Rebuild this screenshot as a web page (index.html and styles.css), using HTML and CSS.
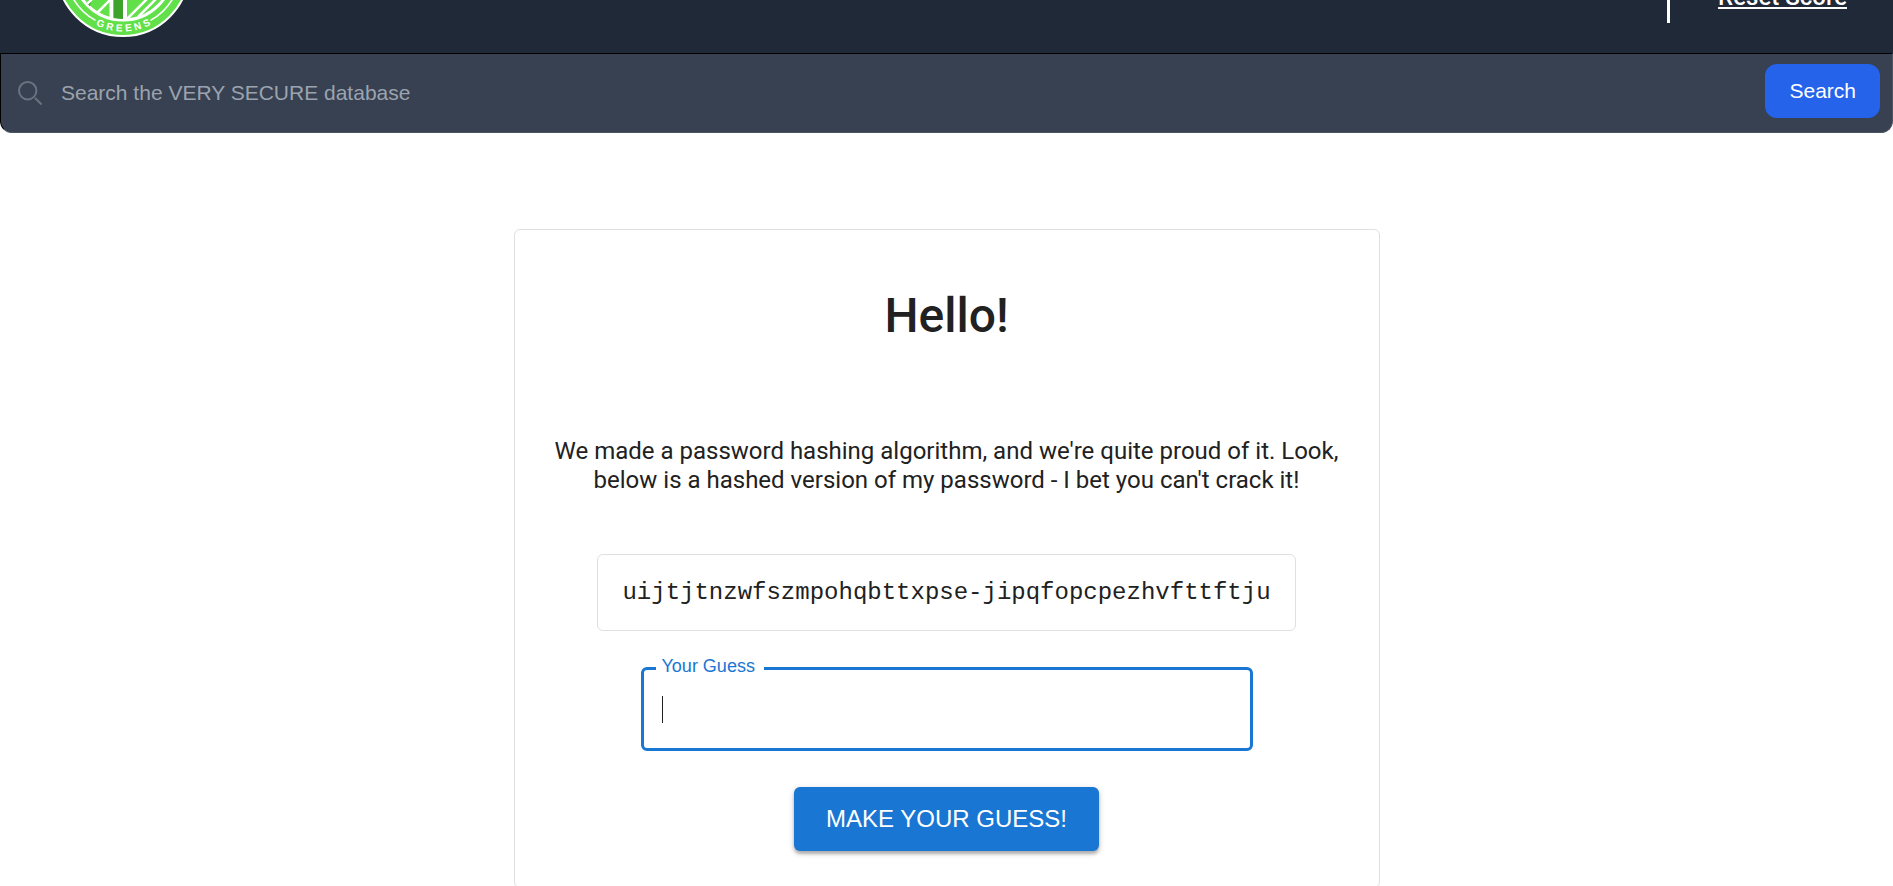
FILE: index.html
```html
<!DOCTYPE html>
<html lang="en">
<head>
<meta charset="utf-8">
<title>Password Challenge</title>
<link rel="stylesheet" href="styles.css">
</head>
<body>
<header class="topbar">
  <svg class="logo" viewBox="0 0 134 134" role="img" aria-label="Greens">
    <defs>
      <path id="arc" d="M5.500 67A61.500 61.500 0 0 0 128.500 67"/>
      <clipPath id="disc"><circle cx="67" cy="67" r="49"/></clipPath>
    </defs>
    <circle cx="67" cy="67" r="66" fill="#62e04a" stroke="#fff" stroke-width="2"/>
    <path d="M9.600 67A57.400 57.400 0 0 0 39.500 117.400M124.400 67A57.400 57.400 0 0 1 94.500 117.400" fill="none" stroke="#fff" stroke-width="1.600"/>
    <circle cx="67" cy="67" r="50" fill="#62e04a" stroke="#fff" stroke-width="3"/>
    <g clip-path="url(#disc)">
      <path d="M26 104L36 94L33 108Z" fill="#3da32b"/>
      <path d="M38 113L58 93M30 102L40 92M71 116L94 93M82 114L103 93" stroke="#fff" stroke-width="2.500"/>
      <path d="M55.500 40V118M69 40V118" stroke="#fff" stroke-width="4"/>
      <path d="M57.500 40H67V116H57.500Z" fill="#3da32b"/>
    </g>
    <text class="logo-text"><textPath href="#arc" startOffset="51%">GREENS</textPath></text>
  </svg>
  <nav class="actions"><a class="reset" href="#">Reset Score</a></nav>
</header>
<form class="search">
  <svg class="search-icon" viewBox="0 0 24 24" aria-hidden="true"><circle cx="9.700" cy="9.700" r="8.700"/><path d="M17 17L23.500 23.500"/></svg>
  <input class="search-input" type="search" aria-label="Search" placeholder="Search the VERY SECURE database">
  <button class="search-button" type="submit">Search</button>
</form>
<main class="card">
  <h1 class="title">Hello!</h1>
  <p class="intro">We made a password hashing algorithm, and we're quite proud of it. Look, below is a hashed version of my password - I bet you can't crack it!</p>
  <code class="hash">uijtjtnzwfszmpohqbttxpse-jipqfopcpezhvfttftju</code>
  <form class="guess">
    <div class="field">
      <label class="field-label" for="guess">Your Guess</label>
      <input class="field-input" id="guess" type="text" autocomplete="off" autofocus>
      <span class="caret"></span>
    </div>
    <button class="guess-button" type="submit">Make your guess!</button>
  </form>
</main>
</body>
</html>
```

FILE: styles.css
```css
* { box-sizing: border-box; }
body {
  margin: 0;
  background: #fff;
  color: #212121;
  font-family: "Liberation Sans", Arial, sans-serif;
  overflow: hidden;
}
.topbar {
  display: flex;
  justify-content: space-between;
  align-items: flex-end;
  height: 53px;
  padding: 0 46px 16px 56px;
  background: #1f2937;
  overflow: hidden;
}
.logo { width: 134px; height: 134px; flex: none; }
.logo-text {
  font: bold 10px "Liberation Sans", Arial, sans-serif;
  letter-spacing: 3px;
  fill: #fff;
  text-anchor: middle;
}
.actions {
  height: 48px;
  margin-bottom: 14px;
  padding: 8px 0 0 48px;
  border-left: 3px solid #fff;
}
.reset {
  color: #fff;
  font: 500 24px/28px Roboto, sans-serif;
}
.search {
  display: flex;
  align-items: center;
  height: 80px;
  padding: 0 12px 0 17px;
  border: 1px solid #000;
  border-right-color: #4b5563;
  border-bottom-color: #4b5563;
  border-radius: 0 0 12px 12px;
  background: #374151;
}
.search-icon { width: 24px; height: 24px; fill: none; stroke: #6b7280; stroke-width: 2; }
.search-input {
  flex: 1;
  min-width: 0;
  padding: 0;
  margin-left: 19px;
  border: 0;
  outline: 0;
  background: none;
  color: #fff;
  font: 21px/30px "Liberation Sans", Arial, sans-serif;
}
.search-input::placeholder { color: #9ca3af; }
.search-button {
  height: 54px;
  padding: 0 24px;
  margin-bottom: 4px;
  border: 0;
  border-radius: 12px;
  background: #2563eb;
  color: #fff;
  font: 21px/30px "Liberation Sans", Arial, sans-serif;
}
.card {
  display: flex;
  flex-direction: column;
  align-items: center;
  width: 866px;
  max-width: 100%;
  margin: 96px auto 0;
  padding: 57px 36px 36px;
  border: 1px solid #e0e0e0;
  border-radius: 6px;
}
.title { margin: 0; font: 500 48px/58px Roboto, sans-serif; }
.intro {
  margin: 92px 0 0;
  font: 400 24px/29px Roboto, sans-serif;
  text-align: center;
}
.hash {
  margin-top: 59px;
  padding: 24px;
  border: 1px solid #e0e0e0;
  border-radius: 6px;
  font: 24px/27px "Liberation Mono", "Courier New", monospace;
}
.guess {
  display: flex;
  flex-direction: column;
  align-items: center;
  gap: 36px;
  width: 612px;
  max-width: 100%;
  margin-top: 36px;
}
.field { position: relative; width: 100%; }
.field-input {
  display: block;
  width: 100%;
  height: 84px;
  padding: 0 18px;
  border: 3px solid #1976d2;
  border-radius: 6px;
  outline: 0;
  background: none;
  caret-color: transparent;
  color: #212121;
  font: 24px/34px "Liberation Sans", Arial, sans-serif;
}
.field-label {
  position: absolute;
  top: -11px;
  left: 15px;
  padding: 0 9px 0 6px;
  background: #fff;
  color: #1976d2;
  font-size: 18px;
  line-height: 21px;
}
.caret { position: absolute; top: 29px; left: 21px; width: 1px; height: 27px; background: #212121; }
.guess-button {
  height: 64px;
  padding: 0 32px;
  border: 0;
  border-radius: 6px;
  background: #1976d2;
  color: #fff;
  font: 24px/42px "Liberation Sans", Arial, sans-serif;
  text-transform: uppercase;
  box-shadow: 0 3px 3px rgba(0, 0, 0, .2), 0 2px 6px rgba(0, 0, 0, .2);
}
```
